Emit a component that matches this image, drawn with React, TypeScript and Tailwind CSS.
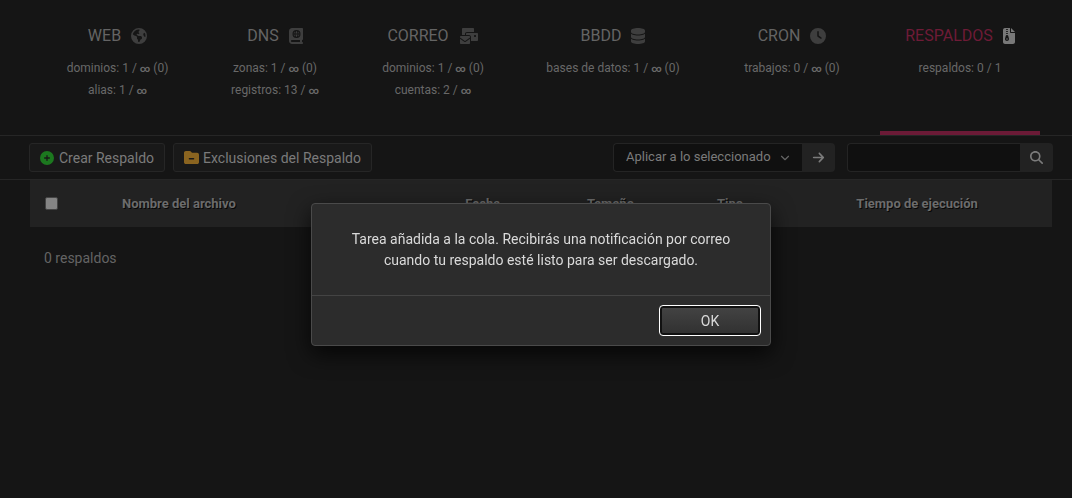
import React from 'react';
import {
    FaArrowRight,
    FaBookAtlas,
    FaCirclePlus,
    FaClock,
    FaDatabase,
    FaEarthAmericas,
    FaEnvelopesBulk,
    FaFileZipper,
    FaFolderMinus,
    FaMagnifyingGlass,
} from 'react-icons/fa6';
import { ChevronDown } from 'lucide-react';
import type { IconType } from 'react-icons';

interface Section {
    name: string;
    icon: IconType;
    iconWidth: string;
    stats: string[];
    active?: boolean;
}

const sections: Section[] = [
    { name: 'WEB', icon: FaEarthAmericas, iconWidth: 'w-4', stats: ['dominios: 1 / ∞ (0)', 'alias: 1 / ∞'] },
    { name: 'DNS', icon: FaBookAtlas, iconWidth: 'w-3.5', stats: ['zonas: 1 / ∞ (0)', 'registros: 13 / ∞'] },
    { name: 'CORREO', icon: FaEnvelopesBulk, iconWidth: 'w-5', stats: ['dominios: 1 / ∞ (0)', 'cuentas: 2 / ∞'] },
    { name: 'BBDD', icon: FaDatabase, iconWidth: 'w-3.5', stats: ['bases de datos: 1 / ∞ (0)'] },
    { name: 'CRON', icon: FaClock, iconWidth: 'w-4', stats: ['trabajos: 0 / ∞ (0)'] },
    { name: 'RESPALDOS', icon: FaFileZipper, iconWidth: 'w-3', stats: ['respaldos: 0 / 1'], active: true },
];

// The infinity sign is set heavier than the text around it
const Stat: React.FC<{ text: string }> = ({ text }) => {
    const [before, after] = text.split('∞');
    return (
        <span>
            {before}
            {after !== undefined && <b className="text-[10px] leading-none">∞</b>}
            {after}
        </span>
    );
};

const SectionNav: React.FC = () => (
    <nav className="grid h-[136px] grid-cols-[157fr_158fr_158fr_202fr_156fr_180fr] border-b border-[#262626] pl-[39px] pr-[22px]">
        {sections.map(({ name, icon: Icon, iconWidth, stats, active }) => (
            <a key={name} href={`#${name.toLowerCase()}`} className="flex flex-col items-center whitespace-nowrap pt-6">
                <span className="flex items-center gap-2.5 text-base leading-[22px]">
                    <span className={active ? 'pt-px text-[#6e1b37]' : 'pt-px text-[#646464]'}>{name}</span>
                    <Icon className={`h-4 ${iconWidth} ${active ? 'text-[#787878]' : 'text-[#3e3e3e]'}`} />
                </span>
                <span className="mt-2.5 flex flex-col items-center text-xs leading-[22px] text-[#686868]">
                    {stats.map((stat) => (
                        <Stat key={stat} text={stat} />
                    ))}
                </span>
                {active && <span className="mt-auto h-1 w-40 bg-[#6b1a36]" />}
            </a>
        ))}
    </nav>
);

const Toolbar: React.FC = () => (
    <div className="flex h-11 items-center border-b border-[#262626] pl-[29px] pr-[19px] text-sm text-[#7b7b7b]">
        <button className="flex h-[29px] items-center gap-[5px] whitespace-nowrap rounded-[3px] border border-[#262626] bg-[#191919] px-2.5">
            <FaCirclePlus className="text-[#1c781f]" />
            Crear Respaldo
        </button>
        <button className="ml-2 flex h-[29px] items-center gap-1 whitespace-nowrap rounded-[3px] border border-[#262626] bg-[#191919] px-2.5">
            <FaFolderMinus className="text-[15px] text-[#8a6420]" />
            Exclusiones del Respaldo
        </button>

        <form className="ml-auto flex h-[29px]" onSubmit={(e) => e.preventDefault()}>
            <div className="relative">
                <select
                    aria-label="Aplicar a lo seleccionado"
                    className="h-full w-[189px] appearance-none rounded-l border border-r-0 border-[#242424] bg-[#101010] pl-3 text-[13px]"
                >
                    <option>Aplicar a lo seleccionado</option>
                </select>
                <ChevronDown className="pointer-events-none absolute right-2.5 top-2 size-3.5 text-[#666]" />
            </div>
            <button aria-label="Aplicar" className="flex w-[33px] items-center justify-center rounded-r bg-[#222] text-[13px]">
                <FaArrowRight />
            </button>
        </form>
        <form className="ml-3 flex h-[29px]" onSubmit={(e) => e.preventDefault()}>
            <input
                type="search"
                aria-label="Buscar"
                className="w-[173px] rounded-l border border-r-0 border-[#242424] bg-[#101010] px-2 outline-none"
            />
            <button aria-label="Buscar" className="flex w-[33px] items-center justify-center rounded-r bg-[#222] text-[13px]">
                <FaMagnifyingGlass />
            </button>
        </form>
    </div>
);

const BackupTable: React.FC = () => (
    <main className="pl-[30px] pr-5">
        <table className="w-full table-fixed text-[13px]">
            <thead className="bg-[#222] text-[#6c6c6c] [text-shadow:1px_1px_#080808]">
                <tr className="h-[47px]">
                    <th className="w-[9%] pl-[15px] text-left">
                        <input
                            type="checkbox"
                            aria-label="Seleccionar todo"
                            className="block size-[13px] appearance-none rounded-[2px] border border-[#444] bg-[#858585]"
                        />
                    </th>
                    <th className="w-[29%] text-left">Nombre del archivo</th>
                    <th className="w-[13%] pr-1">Fecha</th>
                    <th className="w-[12%] pr-1">Tamaño</th>
                    <th className="w-[11%]">Tipo</th>
                    <th className="pr-1">Tiempo de ejecución</th>
                </tr>
            </thead>
        </table>
        <p className="mt-5 pl-3.5 text-sm leading-[22px] text-[#646464]">0 respaldos</p>
    </main>
);

const TaskDialog: React.FC = () => (
    <div className="fixed inset-0 flex items-start justify-center pl-2.5 pt-[203px]">
        <div
            role="alertdialog"
            aria-modal="true"
            aria-describedby="task-message"
            className="w-[460px] rounded border border-[#4a4a4a] bg-[#2c2c2c] text-[#dadada] shadow-[0_8px_22px_rgba(0,0,0,0.75)]"
        >
            <p id="task-message" className="px-9 pb-6 pt-[25px] text-center text-sm leading-[21px]">
                Tarea añadida a la cola. Recibirás una notificación por correo cuando tu respaldo esté listo para ser
                descargado.
            </p>
            <div className="flex justify-end border-t border-[#444] p-[9px]">
                <button className="h-[31px] w-[102px] rounded border border-white bg-linear-to-b from-[#444] to-[#303030] text-sm shadow-[inset_0_0_0_2px_#111]">
                    OK
                </button>
            </div>
        </div>
    </div>
);

const App: React.FC = () => (
    <div className="min-h-screen bg-[#151515] font-[Roboto,sans-serif]">
        <SectionNav />
        <Toolbar />
        <BackupTable />
        <TaskDialog />
    </div>
);

export default App;
